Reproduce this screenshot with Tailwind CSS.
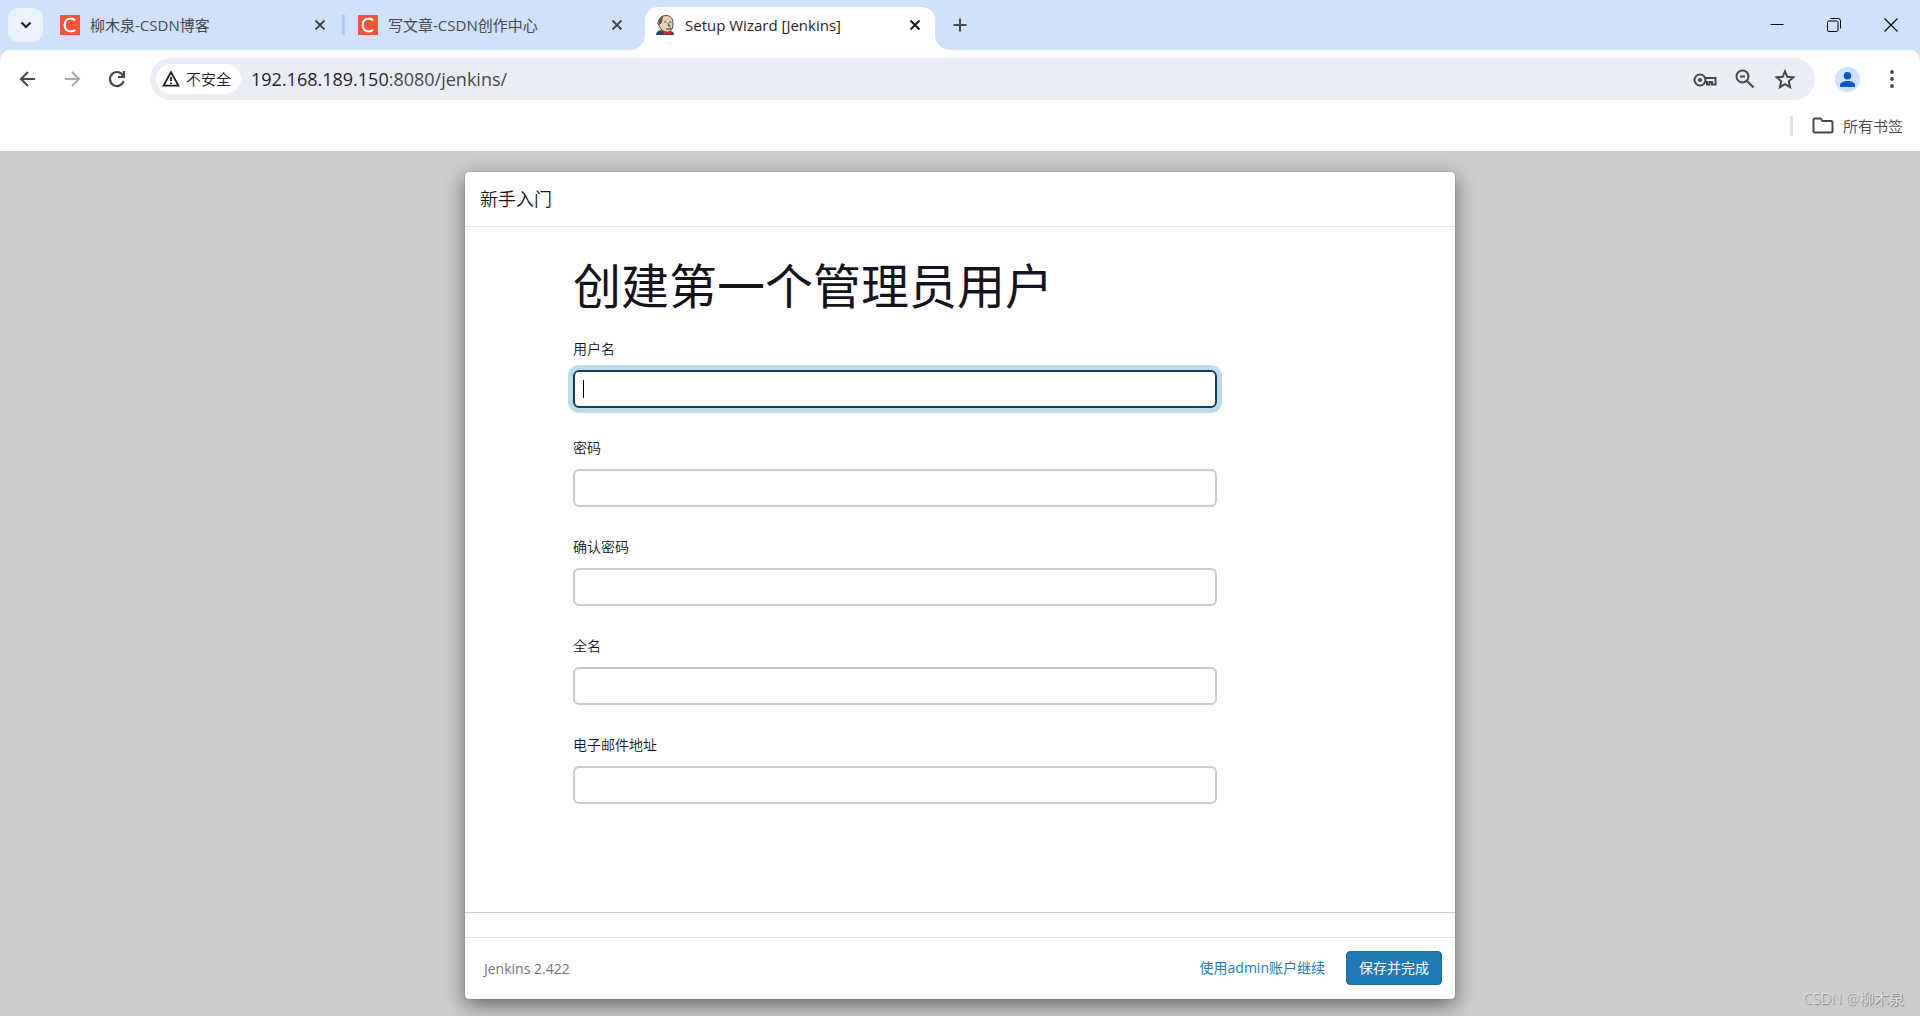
<!DOCTYPE html>
<html lang="zh-CN">
<head>
<meta charset="utf-8">
<title>Setup Wizard [Jenkins]</title>
<script src="https://cdn.jsdelivr.net/npm/@tailwindcss/browser@4"></script>
</head>
<body class="flex min-h-screen flex-col bg-[#cccccc] font-['Open_Sans','Noto_Sans_CJK_SC',sans-serif] font-[350] text-[#14141f]">

<!-- Tab strip -->
<div class="bg-[#d0e1fc]">
  <div class="flex h-[50px] items-center pl-2 font-normal">
    <button aria-label="搜索标签页" class="mr-1 flex h-[34px] w-[35px] shrink-0 items-center justify-center rounded-[10px] bg-[#eaf2fe]">
      <svg class="size-3" viewBox="0 0 12 12" fill="none" stroke="#1f1f1f" stroke-width="2.200"><path d="M1.500 3.500 6 8l4.500-4.500"/></svg>
    </button>
    <div class="flex h-5 w-[298px] items-center border-r-3 border-[#a8cbfb] pl-[13px] pr-3 text-[15px] text-[#474747]">
      <svg class="mr-[10px] size-5 shrink-0" viewBox="0 0 20 20"><path fill="#fc5134" d="M0 0h20v20H0z"/><path d="M15 5.400A5.800 5.800 0 0 0 10.500 3.600C7 3.600 4.700 6.400 4.700 10c0 3.800 2.300 6.400 6 6.400 1.800 0 3.300-.6 4.400-1.700" fill="none" stroke="#fff" stroke-width="2.300"/></svg>
      <span class="grow whitespace-nowrap">柳木泉-CSDN博客</span>
      <button aria-label="关闭标签页"><svg class="size-5" viewBox="0 0 20 20" stroke="#474747" stroke-width="1.900"><path d="m5.500 5.500 9 9m0-9-9 9"/></svg></button>
    </div>
    <div class="flex h-5 w-[298px] items-center pl-[13px] pr-4 text-[15px] text-[#474747]">
      <svg class="mr-[10px] size-5 shrink-0" viewBox="0 0 20 20"><path fill="#fc5134" d="M0 0h20v20H0z"/><path d="M15 5.400A5.800 5.800 0 0 0 10.500 3.600C7 3.600 4.700 6.400 4.700 10c0 3.800 2.300 6.400 6 6.400 1.800 0 3.300-.6 4.400-1.700" fill="none" stroke="#fff" stroke-width="2.300"/></svg>
      <span class="grow whitespace-nowrap">写文章-CSDN创作中心</span>
      <button aria-label="关闭标签页"><svg class="size-5" viewBox="0 0 20 20" stroke="#474747" stroke-width="1.900"><path d="m5.500 5.500 9 9m0-9-9 9"/></svg></button>
    </div>
    <div class="relative ml-[2px] flex h-[43px] w-[290px] items-center self-end rounded-t-[13px] bg-white pb-[7px] pl-[11px] pr-[10px] text-[15px] text-[#1f1f1f]">
      <svg class="absolute bottom-0 -left-[15px] size-[15px]" viewBox="0 0 15 15"><path fill="#fff" d="M15 0v15H0A15 15 0 0 0 15 0"/></svg>
      <svg class="absolute bottom-0 -right-[15px] size-[15px]" viewBox="0 0 15 15"><path fill="#fff" d="M0 0v15h15A15 15 0 0 1 0 0"/></svg>
      <svg class="mr-[9px] size-5 shrink-0" viewBox="0 0 20 20">
        <path fill="#28485f" d="M0 20c.5-3.500 2.500-4.500 5-5l4 2 5-1c2.500.5 4 1 4 4z"/>
        <path fill="#e8cfb5" stroke="#39332f" stroke-width=".9" d="M3 10C1.200 9.800 1.700 7 2.600 6.700 3 3 6 .5 10 .5c5 0 7 3.500 7 7.500 0 5-1.600 9-5.500 9.200C7.500 17.400 4 14 3 10"/>
        <path fill="#625b56" d="M3.200 10C1.500 5 4 1.500 8 .8 5.800 3 6.800 6 5.500 8z"/>
        <path fill="none" stroke="#5c4a3f" stroke-width="1.200" d="M8 7h2.500m2.500 0h2.500M12 8l1.500 3H12m-2 2.500c2 1 4 .5 5-.5"/>
        <path fill="#d3282d" d="m8 16 3 1.200 4-1.400.5 4L11 19l-3 1z"/>
      </svg>
      <span class="grow whitespace-nowrap">Setup Wizard [Jenkins]</span>
      <button aria-label="关闭标签页"><svg class="size-5" viewBox="0 0 20 20" stroke="#1f1f1f" stroke-width="2"><path d="m5.500 5.500 9 9m0-9-9 9"/></svg></button>
    </div>
    <button aria-label="新标签页" class="ml-[15px]"><svg class="size-5" viewBox="0 0 20 20" stroke="#474747" stroke-width="2"><path d="M10 3.500v13M3.500 10h13"/></svg></button>
    <div class="ml-auto flex pr-px">
      <button aria-label="最小化" class="flex w-[57px] justify-center"><svg class="size-[14px]" viewBox="0 0 14 14" stroke="#000"><path d="M.5 6.500h13"/></svg></button>
      <button aria-label="还原" class="flex w-[57px] justify-center"><svg class="size-[14px]" viewBox="0 0 14 14" fill="none" stroke="#000"><rect x=".5" y="3" width="10.500" height="10.500" rx="1.500"/><path d="M3.500.5H11A2.500 2.500 0 0 1 13.500 3v7.500"/></svg></button>
      <button aria-label="关闭" class="flex w-[57px] justify-center"><svg class="size-[14px]" viewBox="0 0 14 14" stroke="#000" stroke-width="1.100"><path d="m.5.5 13 13m0-13-13 13"/></svg></button>
    </div>
  </div>

  <!-- Toolbar -->
  <div class="flex h-[58px] items-center rounded-t-[10px] bg-white px-[18px]">
    <button aria-label="后退" class="mr-5"><svg class="size-5" viewBox="0 0 20 20" fill="none" stroke="#474747" stroke-width="2"><path d="M17 10H3.500M10 3l-7 7 7 7"/></svg></button>
    <button aria-label="前进" class="ml-1 mr-5"><svg class="size-5" viewBox="0 0 20 20" fill="none" stroke="#a9a9a9" stroke-width="2"><path d="M3 10h13.500M10 3l7 7-7 7"/></svg></button>
    <button aria-label="重新加载" class="ml-[5px] mr-[23px]"><svg class="size-5" viewBox="0 0 20 20" fill="none" stroke="#474747" stroke-width="2.200"><path d="M16.500 7.500A7 7 0 1 0 16.700 12M17 2v6h-6"/></svg></button>
    <div class="flex h-[42px] grow items-center rounded-full bg-[#ebeef7] pl-[6px] pr-[18px]">
      <button class="mr-[10px] flex h-[30px] w-[85px] shrink-0 items-center gap-[6px] whitespace-nowrap rounded-full bg-white pl-[6px] text-[15px] text-[#1f1f1f]">
        <svg class="size-[18px] shrink-0" viewBox="0 0 18 18" fill="none" stroke="#1f1f1f" stroke-width="1.800"><path d="M9 2.200 16.500 15.600h-15zM9 7v4m0 1.500v1.600"/></svg>不安全
      </button>
      <div class="relative flex h-8 grow items-center text-[18px] leading-8 font-normal">
        <span aria-hidden="true" class="text-[#1f1f1f]">192.168.189.150<span class="text-[#474747]">:8080/jenkins/</span></span>
        <input type="text" aria-label="地址" class="absolute inset-0 w-full bg-transparent outline-none">
      </div>
      <div class="flex items-center gap-4">
        <button aria-label="密码"><svg class="size-6" viewBox="0 0 24 24" fill="none" stroke="#474747" stroke-width="2"><circle cx="7" cy="13" r="5.500"/><circle cx="7" cy="13" r="2" fill="#474747" stroke="none"/><path d="M12 11h10.500v6.500H19V15h-2.500v2.500H14V15h-2"/></svg></button>
        <button aria-label="缩放"><svg class="size-6" viewBox="0 0 24 24" fill="none" stroke="#474747" stroke-width="2"><circle cx="9.500" cy="9.500" r="6"/><path d="m14 14 6.500 6.500M7 9.500h5"/></svg></button>
        <button aria-label="为此标签页添加书签"><svg class="size-6" viewBox="0 0 24 24" fill="none" stroke="#474747" stroke-width="2"><path d="m12 4.300 2.300 5.500 6 .5-4.500 4 1.300 5.900-5.100-3.100-5.100 3.100 1.300-5.900-4.500-4 6-.5z"/></svg></button>
      </div>
    </div>
    <button aria-label="个人资料" class="ml-5"><svg class="size-[25px]" viewBox="0 0 25 25"><circle cx="12.500" cy="12.500" r="12.500" fill="#d0e2fd"/><circle cx="12.500" cy="8.800" r="3.800" fill="#0b57d0"/><path fill="#0b57d0" d="M5 20v-2c0-2.500 4-4 7.500-4s7.500 1.500 7.500 4v2z"/></svg></button>
    <button aria-label="菜单" class="ml-[22px]"><svg class="size-5" viewBox="0 0 20 20" fill="#474747"><circle cx="10" cy="3" r="1.900"/><circle cx="10" cy="10" r="1.900"/><circle cx="10" cy="17" r="1.900"/></svg></button>
  </div>

  <!-- Bookmarks bar -->
  <div class="flex h-[43px] items-start justify-end bg-white pr-[17px] pt-2">
    <div class="flex h-5 items-center border-l-3 border-[#d0e2fd] pl-[19px] text-[15px] text-[#474747]">
      <svg class="mr-[9px] h-5 w-[22px]" viewBox="0 0 22 20" fill="none" stroke="#474747" stroke-width="2"><path d="M1.500 16V4q0-1.500 1.500-1.500h5.500l2 2.500h8.500q1.500 0 1.500 1.500V15q0 1.500-1.500 1.500H3q-1.500 0-1.500-1.500"/></svg>
      <a href="#">所有书签</a>
    </div>
  </div>
</div>

<!-- Setup wizard -->
<main class="flex grow flex-col px-4 pb-[17px] pt-[21px]">
  <form class="mx-auto flex w-full max-w-[990px] grow flex-col rounded-[4px] bg-white shadow-[0_0_1px_rgba(0,0,0,0.6),0_6px_20px_rgba(0,0,0,0.5)]">
    <h4 class="flex h-[55px] items-center border-b border-[#e5e5e5] pl-[15px] text-[18px] font-[350]">新手入门</h4>
    <div class="grow border-b border-[#cccccc] px-[108px]">
      <h1 class="pb-4 pt-[23px] text-[48px] leading-[72px] font-normal">创建第一个管理员用户</h1>
      <div class="flex max-w-[644px] flex-col gap-[29px] text-[14px] leading-[21px]">
        <div class="flex flex-col gap-[11px]">
          <label for="username">用户名</label>
          <div class="relative flex flex-col">
            <input id="username" type="text" class="h-[38px] rounded-[6px] border-2 border-[#0b4263] px-2 text-[18px] caret-transparent outline-none ring-5 ring-[#bfdbe7]">
            <span class="absolute top-[10px] left-[10px] h-[18px] w-px bg-black"></span>
          </div>
        </div>
        <div class="flex flex-col gap-[11px]"><label for="password">密码</label><input id="password" type="password" class="h-[38px] rounded-[6px] border-2 border-[#c3cdd1] px-2 outline-none"></div>
        <div class="flex flex-col gap-[11px]"><label for="confirm">确认密码</label><input id="confirm" type="password" class="h-[38px] rounded-[6px] border-2 border-[#c3cdd1] px-2 outline-none"></div>
        <div class="flex flex-col gap-[11px]"><label for="fullname">全名</label><input id="fullname" type="text" class="h-[38px] rounded-[6px] border-2 border-[#c3cdd1] px-2 outline-none"></div>
        <div class="flex flex-col gap-[11px]"><label for="email">电子邮件地址</label><input id="email" type="email" class="h-[38px] rounded-[6px] border-2 border-[#c3cdd1] px-2 outline-none"></div>
      </div>
    </div>
    <div class="h-6"></div>
    <div class="flex h-[62px] items-center border-t border-[#e5e5e5] pb-[2px] pl-[19px] pr-[13px] text-[14px] font-normal">
      <span class="grow pt-[2px] text-[#73737a]">Jenkins 2.422</span>
      <button type="button" class="mr-[21px] text-[#1f7ab6]">使用admin账户继续</button>
      <button type="submit" class="h-[34px] w-24 rounded-[4px] border border-[#1b6ea4] bg-[#1f7ab6] text-white">保存并完成</button>
    </div>
  </form>
</main>
<div class="absolute right-4 bottom-[7px] text-[15px] text-[#e0e0e0] [text-shadow:1px_1px_1px_#777]">CSDN @柳木泉</div>
</body>
</html>
